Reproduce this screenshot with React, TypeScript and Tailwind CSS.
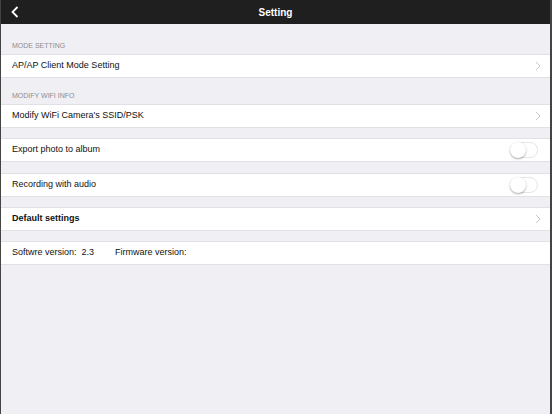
import React from 'react'

const Chevron = () => (
  <svg width="6" height="10" viewBox="0 0 6 10" className="mr-[9px]">
    <path d="M1 1l4 4-4 4" fill="none" stroke="#c7c7cc" strokeWidth="1" />
  </svg>
)

const Toggle = () => (
  <div className="relative mr-[12px] h-[16px] w-[28px] rounded-full border border-[#e5e5ea] bg-white">
    <div className="absolute -left-px -top-px h-[16px] w-[16px] rounded-full bg-white shadow-[0_1px_2px_rgba(0,0,0,0.35)]" />
  </div>
)

const Row = ({ children, right }: { children: React.ReactNode; right?: React.ReactNode }) => (
  <div className="flex h-[24px] items-center justify-between border-y border-[#e0e0e5] bg-white pl-[11px] text-[9px] text-[#111]">
    <div className="flex items-center">{children}</div>
    {right}
  </div>
)

const Header = ({ label, h }: { label: string; h: string }) => (
  <div className={`flex items-end pb-[3px] pl-[11px] text-[7px] uppercase text-[#8e8e93] ${h}`}>{label}</div>
)

export default function App() {
  return (
    <div
      className="flex h-[414px] w-[552px] flex-col border-l border-r-2 border-[#444] bg-[#efeff4]"
      style={{ fontFamily: '"Liberation Sans", Arial, sans-serif' }}
    >
      {/* nav bar */}
      <div className="relative flex h-[24px] items-center justify-center bg-[#1f1f1f] text-[10px] font-semibold text-white">
        <svg width="8" height="12" viewBox="0 0 8 12" className="absolute left-[10px] top-[6px]">
          <path d="M6.5 1L1.5 6l5 5" fill="none" stroke="#fff" strokeWidth="1.8" />
        </svg>
        Setting
      </div>

      <Header label="Mode setting" h="h-[30px]" />
      <Row right={<Chevron />}>AP/AP Client Mode Setting</Row>

      <Header label="Modify WiFi info" h="h-[26px]" />
      <Row right={<Chevron />}>Modify WiFi Camera's SSID/PSK</Row>

      <div className="h-[10px]" />
      <Row right={<Toggle />}>Export photo to album</Row>

      <div className="h-[11px]" />
      <Row right={<Toggle />}>Recording with audio</Row>

      <div className="h-[10px]" />
      <Row right={<Chevron />}>
        <span className="font-bold">Default settings</span>
      </Row>

      <div className="h-[10px]" />
      <Row>
        <span>Softwre version:&nbsp; 2.3</span>
        <span className="ml-[21px]">Firmware version:</span>
      </Row>
    </div>
  )
}
